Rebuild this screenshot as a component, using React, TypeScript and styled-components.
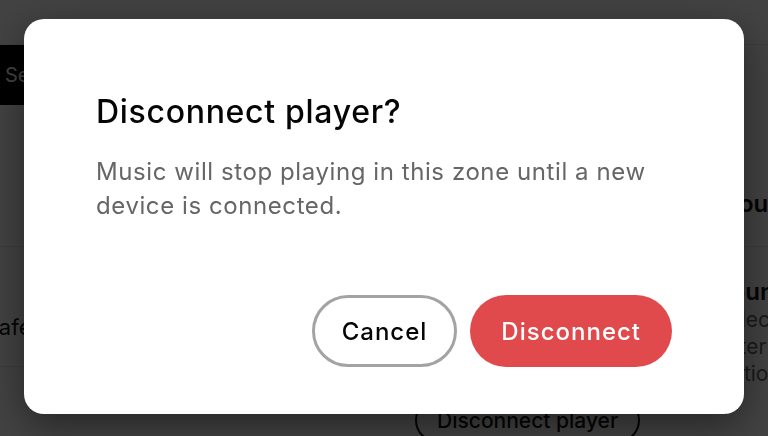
import React from "react";
import styled, { createGlobalStyle } from "styled-components";

const Global = createGlobalStyle`
  html, body { margin: 0; padding: 0; overflow: hidden; }
  body { font-family: Inter, "Noto Sans", "Liberation Sans", sans-serif; background: #fff; }
  * { box-sizing: border-box; }
`;

/* ---------- page behind the dialog ---------- */

const Page = styled.div`
  width: 768px;
  height: 436px;
  background: #fff;
  display: flex;
  flex-direction: column;
  overflow: hidden;
`;

const TopBar = styled.header`
  height: 45px;
  flex: none;
  background: #fdfdfd;
  border-bottom: 1px solid #eee;
`;

const Columns = styled.div`
  flex: 1;
  display: grid;
  grid-template-columns: 400px 1fr;
`;

const LeftCol = styled.div`
  display: flex;
  flex-direction: column;
`;

const ActiveTab = styled.div`
  height: 60px;
  background: #000;
  color: #fff;
  display: flex;
  align-items: center;
  padding-left: 5px;
  font-size: 20px;
  width: 220px;
`;

const ListRow = styled.div<{ $h: number }>`
  height: ${(p) => p.$h}px;
  border-bottom: 1px solid #e6e6e6;
  display: flex;
  align-items: flex-end;
  padding: 0 0 26px 0;
  font-size: 22px;
  color: #111;
`;

const RowLabel = styled.span`
  margin-left: -14px;
`;

const RightCol = styled.div`
  display: flex;
  flex-direction: column;
  padding-left: 15px;
`;

const Section = styled.div<{ $h: number }>`
  height: ${(p) => p.$h}px;
  border-bottom: 1px solid #e6e6e6;
  display: flex;
  flex-direction: column;
  justify-content: flex-end;
  padding-bottom: 28px;
`;

const SectionTitle = styled.div<{ $indent?: number }>`
  font-size: 24px;
  font-weight: 600;
  color: #111;
  padding-left: ${(p) => p.$indent ?? 0}px;
  white-space: nowrap;
`;

const SoundBlock = styled.div`
  display: flex;
  flex-direction: column;
  padding: 30px 0 0 300px;
  white-space: nowrap;
`;

const SoundText = styled.div`
  font-size: 21px;
  line-height: 27px;
  color: #666;
  &:first-of-type { margin-top: 13px; }
`;

const GhostButton = styled.div`
  align-self: flex-start;
  margin-top: 10px;
  height: 46px;
  padding: 0 20px;
  border: 2px solid #111;
  border-radius: 23px;
  font-size: 21px;
  font-weight: 500;
  color: #111;
  display: flex;
  align-items: center;
`;

/* ---------- dialog ---------- */

const Overlay = styled.div`
  position: fixed;
  inset: 0;
  background: rgba(0, 0, 0, 0.74);
  display: flex;
  justify-content: center;
  align-items: flex-start;
  padding-top: 19px;
`;

const Dialog = styled.div`
  width: 720px;
  height: 395px;
  background: #fff;
  border-radius: 20px;
  box-shadow: 0 12px 40px rgba(0, 0, 0, 0.45);
  padding: 74px 72px 47px;
  display: flex;
  flex-direction: column;
`;

const Title = styled.h2`
  margin: 0;
  font-size: 32px;
  line-height: 38px;
  font-weight: 500;
  letter-spacing: 0.7px;
  color: #050505;
`;

const Body = styled.p`
  margin: 24px 0 0;
  font-size: 24px;
  line-height: 34px;
  font-weight: 400;
  letter-spacing: 0.58px;
  color: #666;
  max-width: 576px;
`;

const Actions = styled.div`
  margin-top: auto;
  display: flex;
  justify-content: flex-end;
  gap: 13px;
`;

const Button = styled.button<{ $variant: "outline" | "danger" }>`
  height: 72px;
  border-radius: 36px;
  font-family: inherit;
  font-size: 24px;
  font-weight: 500;
  letter-spacing: 1px;
  cursor: pointer;
  padding: 0 ${(p) => (p.$variant === "outline" ? "27px" : "31px")};
  border: ${(p) => (p.$variant === "outline" ? "3px solid #a3a3a3" : "none")};
  background: ${(p) => (p.$variant === "outline" ? "#fff" : "#e04a4c")};
  color: ${(p) => (p.$variant === "outline" ? "#050505" : "#fff")};
`;

export default function App() {
  return (
    <>
      <Global />
      <Page>
        <TopBar />
        <Columns>
          <LeftCol>
            <ActiveTab>Settings</ActiveTab>
            <ListRow $h={142} />
            <ListRow $h={120}>
              <RowLabel>cafe</RowLabel>
            </ListRow>
          </LeftCol>
          <RightCol>
            <Section $h={142 + 60}>
              <SectionTitle $indent={300}>Cloud</SectionTitle>
            </Section>
            <SoundBlock>
              <SectionTitle>Sound</SectionTitle>
              <SoundText>Selected</SoundText>
              <SoundText>External</SoundText>
              <SoundText>Options</SoundText>
            </SoundBlock>
            <GhostButton>Disconnect player</GhostButton>
          </RightCol>
        </Columns>
      </Page>
      <Overlay>
        <Dialog role="dialog" aria-modal="true">
          <Title>Disconnect player?</Title>
          <Body>Music will stop playing in this zone until a new device is connected.</Body>
          <Actions>
            <Button $variant="outline">Cancel</Button>
            <Button $variant="danger">Disconnect</Button>
          </Actions>
        </Dialog>
      </Overlay>
    </>
  );
}
